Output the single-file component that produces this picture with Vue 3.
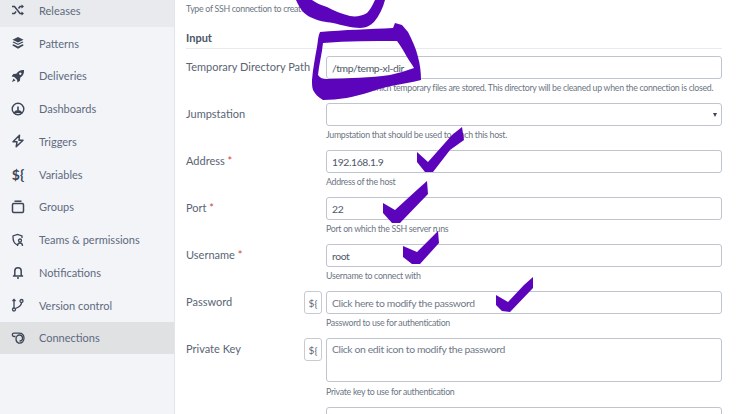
<script setup>
const nav = [
  { label: 'Releases', icon: 'shuffle', state: 'hover' },
  { label: 'Patterns', icon: 'layers' },
  { label: 'Deliveries', icon: 'rocket' },
  { label: 'Dashboards', icon: 'gauge' },
  { label: 'Triggers', icon: 'bolt' },
  { label: 'Variables', icon: 'vars' },
  { label: 'Groups', icon: 'window' },
  { label: 'Teams & permissions', icon: 'shield' },
  { label: 'Notifications', icon: 'bell' },
  { label: 'Version control', icon: 'git' },
  { label: 'Connections', icon: 'link', state: 'active' },
]
const fields = [
  { label: 'Temporary Directory Path', value: '/tmp/temp-xl-dir', hint: 'Directory in which temporary files are stored. This directory will be cleaned up when the connection is closed.' },
  { label: 'Jumpstation', value: '', select: true, hint: 'Jumpstation that should be used to reach this host.' },
  { label: 'Address', req: true, value: '192.168.1.9', hint: 'Address of the host' },
  { label: 'Port', req: true, value: '22', hint: 'Port on which the SSH server runs' },
  { label: 'Username', req: true, value: 'root', hint: 'Username to connect with' },
  { label: 'Password', placeholder: 'Click here to modify the password', variable: true, hint: 'Password to use for authentication' },
  { label: 'Private Key', placeholder: 'Click on edit icon to modify the password', variable: true, tall: true, hint: 'Private key to use for authentication' },
  { label: '', value: '', last: true },
]
</script>

<template>
  <div class="page">
    <aside class="sidebar">
      <nav class="nav">
        <div v-for="item in nav" :key="item.label" class="nav-item" :class="item.state">
          <span class="nav-icon">
            <svg v-if="item.icon === 'shuffle'" viewBox="0 0 14 14" width="14" height="14" fill="none" stroke="#3d4658" stroke-width="1.5">
              <path d="M1 3.5h2.5l5.5 7h3M1 10.5h2.5l1.6-2M7.5 5.5l1.500-2h3" />
              <path d="M10.500 1.500l2.500 2-2.500 2zM10.500 8.500l2.500 2-2.500 2z" fill="#3d4658" stroke="none" />
            </svg>
            <svg v-else-if="item.icon === 'layers'" viewBox="0 0 14 14" width="14" height="14" fill="#3d4658">
              <path d="M7 1l5.500 2.700L7 6.400 1.500 3.700z" />
              <path d="M2.600 5.600L7 7.800l4.400-2.200 1.100.6L7 9 1.500 6.200z" />
              <path d="M2.600 8.200L7 10.400l4.400-2.200 1.100.6v.6L7 12.800 1.500 9.400v-.6z" />
            </svg>
            <svg v-else-if="item.icon === 'rocket'" viewBox="0 0 14 14" width="14" height="14" fill="#3d4658">
              <path fill-rule="evenodd" d="M13 1c.3 3.500-1 6-3.800 7.800l-.2 3L6.500 13.500l-.5-2.800-2.700-2.700L.6 7.500 2.300 5l3-.2C7 2 9.500.8 13 1zM9.300 3.500a1.200 1.200 0 1 0 .01 0z" />
              <path d="M2.500 9.500l2 2L1 13z" />
            </svg>
            <svg v-else-if="item.icon === 'gauge'" viewBox="0 0 14 14" width="14" height="14" fill="none" stroke="#3d4658" stroke-width="1.400">
              <circle cx="7" cy="7" r="5.800" />
              <path d="M7 8V4.500" stroke-width="1.600" />
              <path d="M3 11c1-1.600 2.400-2.200 4-2.200s3 .6 4 2.200" fill="#3d4658" />
            </svg>
            <svg v-else-if="item.icon === 'bolt'" viewBox="0 0 14 14" width="14" height="14" fill="none" stroke="#3d4658" stroke-width="1.500" stroke-linejoin="round">
              <path d="M8.500 1.200L2 7.800h4L5.200 12.800 12 6.200H8z" />
            </svg>
            <span v-else-if="item.icon === 'vars'" class="vars">${</span>
            <svg v-else-if="item.icon === 'window'" viewBox="0 0 14 14" width="14" height="14" fill="none" stroke="#3d4658" stroke-width="1.500">
              <rect x="1.500" y="3.500" width="11" height="9" rx="1.200" />
              <path d="M3.500 1.200h7" />
            </svg>
            <svg v-else-if="item.icon === 'shield'" viewBox="0 0 14 14" width="14" height="14" fill="none" stroke="#3d4658" stroke-width="1.300">
              <path d="M6.500 12C3.500 11 1.800 8.500 2 3l4.500-1.500L11 3v2" />
              <circle cx="9" cy="7.500" r="1.500" />
              <path d="M6.500 13c0-2 1-3 2.500-3s2.500 1 2.500 3" />
            </svg>
            <svg v-else-if="item.icon === 'bell'" viewBox="0 0 14 14" width="14" height="14" fill="none" stroke="#3d4658" stroke-width="1.500">
              <path d="M3.800 10V6a3.200 3.200 0 0 1 6.400 0v4l1.300 1h-9z" stroke-linejoin="round" />
              <path d="M6 13h2" stroke-width="1.400" />
            </svg>
            <svg v-else-if="item.icon === 'git'" viewBox="0 0 14 14" width="14" height="14" fill="none" stroke="#3d4658" stroke-width="1.300">
              <circle cx="3" cy="11.500" r="1.500" />
              <circle cx="10.500" cy="3" r="1.500" />
              <path d="M3 10V1.500M1.500 3L3 1.500 4.500 3" />
              <path d="M10.500 4.500c0 3-2 4.500-6 6" />
            </svg>
            <svg v-else viewBox="0 0 14 14" width="14" height="14" fill="none" stroke="#3d4658" stroke-width="1.300">
              <path d="M4.500 5.500H3a1.700 1.700 0 0 1 0-3.400h5c3 0 5 2 5 5s-2 5-4.500 5H7" />
              <path d="M7.500 12c-1.500-.5-2.500-2-2.500-4s1.500-4 3.500-4 3 1.500 3 3.500-1.500 2.500-3 2.500" />
            </svg>
          </span>
          <span class="nav-label">{{ item.label }}</span>
        </div>
      </nav>
    </aside>

    <main class="main">
      <p class="hint top-hint">Type of SSH connection to create.</p>
      <h2 class="section">Input</h2>
      <div v-for="f in fields" :key="f.label" class="row" :class="{ tall: f.tall }">
        <div class="label">
          <span>{{ f.label }}</span><span v-if="f.req" class="req"> *</span>
        </div>
        <div class="var-slot">
          <span v-if="f.variable" class="var-btn">${</span>
        </div>
        <div class="control">
          <div class="input" :class="{ placeholder: f.placeholder }">
            <span>{{ f.value || f.placeholder }}</span>
            <span v-if="f.select" class="caret"></span>
          </div>
          <p v-if="f.hint" class="hint">{{ f.hint }}</p>
        </div>
      </div>
    </main>

    <svg class="marks" viewBox="0 0 740 414" width="740" height="414" fill="#5c04bb">
      <path d="M296 0C300 9 304 14 310 17C318 21 326 22 333 23C342 25 352 28 360 28C366 28 371 25 374 22C379 16 383 8 385 0H375C372 6 370 10 367 13C362 16 356 17 350 16C342 14 334 11 327 7C321 5 316 3 312 0Z" />
      <path fill-rule="evenodd" d="M320 32C344 30 370 29 393 28L395 23L402 25L408 32C412 40 416 48 418 57C420 64 421 72 421 80C405 84 385 86 370 92C355 97 338 100 323 100C318 97 315 94 313 90C312 87 312 84 312 80C313 68 315 58 317 47C318 41 318 36 320 32ZM323 43C322 54 319 64 318 75C320 78 323 79 327 79C350 78 370 78 390 75C398 73 406 71 414 68C412 64 409 61 407 57C404 52 401 46 397 41C372 41 348 41 323 43Z" />
      <path d="M417 152L428 162L452 135L462 127L464 140L450 150L433 172H425L417 162Z" />
      <path d="M383 203L395 210L418 189L427 181L428 194L400 223H392L383 213Z" />
      <path d="M403 246L417 252L431 238L438 231L439 243L420 264H412L403 257Z" />
      <path d="M496 295L508 302L524 285L533 277L533 288L510 312L502 311L496 305Z" />
    </svg>
  </div>
</template>

<style>
html, body { margin: 0; padding: 0; background: #fff; }
</style>

<style scoped>
.page {
  position: relative;
  display: flex;
  width: 740px;
  height: 414px;
  overflow: hidden;
  background: #fff;
  font-family: Lato, "Noto Sans", sans-serif;
}
.sidebar {
  flex: 0 0 174px;
  background: #f3f4f7;
  border-right: 1px solid #e3e5e9;
}
.nav { margin-top: -6px; }
.nav-item {
  display: flex;
  align-items: center;
  height: 32.750px;
  padding-left: 11px;
  color: #5d6a80;
  font-size: 11px;
}
.nav-item.hover { background: #e9eaed; }
.nav-item.active { background: #e0e1e3; }
.nav-icon {
  display: flex;
  align-items: center;
  justify-content: center;
  width: 14px;
  height: 14px;
  margin-right: 14px;
}
.vars { color: #3d4658; font-size: 14px; font-weight: 700; white-space: nowrap; }
.main {
  flex: 1;
  min-width: 0;
  padding: 0 18px 0 11px;
}
.top-hint {
  margin: 4px 0 0 140px;
}
.section {
  margin: 15px 0 7px;
  height: 14px;
  padding-bottom: 4px;
  border-bottom: 1px solid #e8eaed;
  color: #4c5566;
  font-size: 11px;
  font-weight: 700;
  line-height: 15px;
}
.row {
  display: grid;
  grid-template-columns: 118px 22px 1fr;
  height: 47px;
}
.row.tall { height: 69px; }
.label {
  padding-top: 3.500px;
  color: #5a6474;
  font-size: 11px;
  line-height: 14px;
  white-space: nowrap;
}
.req { color: #d4453b; }
.var-slot { min-width: 0; }
.var-btn {
  display: flex;
  align-items: center;
  justify-content: center;
  width: 16px;
  height: 21px;
  border: 1px solid #c6cad2;
  border-radius: 3px;
  color: #5a6474;
  font-size: 10px;
  background: #fff;
}
.input {
  display: flex;
  align-items: center;
  justify-content: space-between;
  box-sizing: border-box;
  height: 23px;
  padding: 0 4px 0 5px;
  border: 1px solid #bfc4ce;
  border-radius: 3px;
  color: #4e5868;
  font-size: 10.400px;
  letter-spacing: -0.380px;
  background: #fff;
}
.input.placeholder { color: #70798a; }
.tall .input { height: 44px; align-items: flex-start; padding-top: 4px; }
.caret {
  width: 0;
  height: 0;
  border-left: 2px solid transparent;
  border-right: 2px solid transparent;
  border-top: 4px solid #3d4658;
}
.hint {
  margin: 3px 0 0;
  color: #6d7684;
  font-size: 8.800px;
  letter-spacing: -0.300px;
  line-height: 12px;
  white-space: nowrap;
}
.tall .hint { margin-top: 4px; }
.marks {
  position: absolute;
  top: 0;
  left: 0;
  pointer-events: none;
}
</style>
